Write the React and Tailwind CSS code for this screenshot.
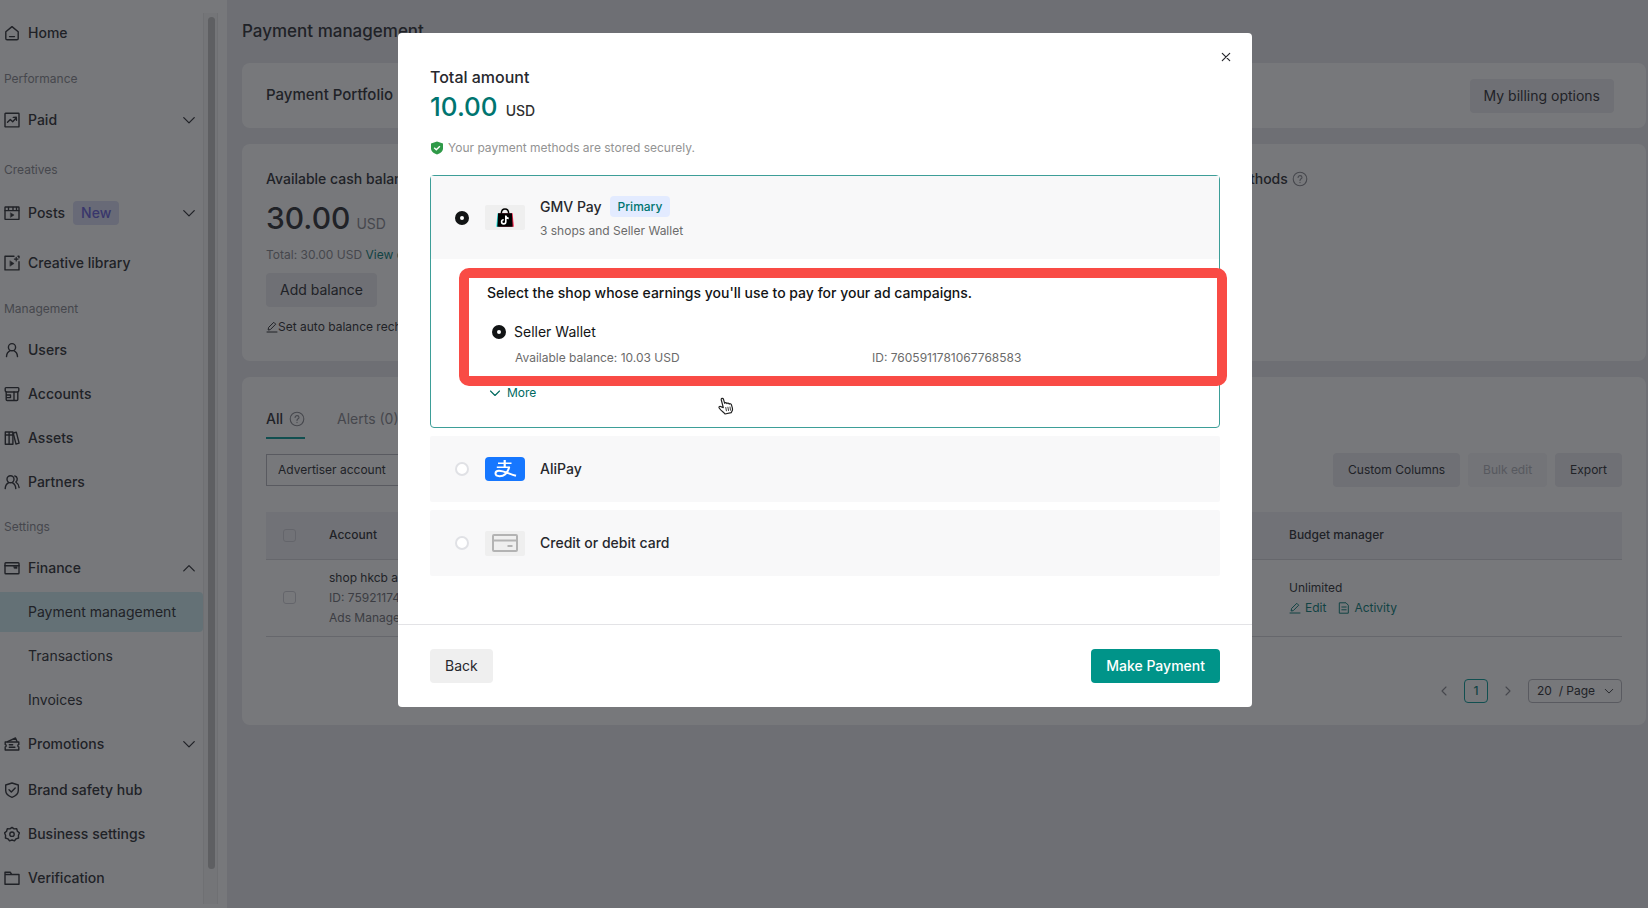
import React, { useState } from "react";

function Icon({ children, className = "size-4", box = "0 0 16 16", width = 1.4 }) {
  return (
    <svg
      viewBox={box}
      className={`shrink-0 ${className}`}
      fill="none"
      stroke="currentColor"
      strokeWidth={width}
      strokeLinecap="round"
      strokeLinejoin="round"
      aria-hidden="true"
    >
      {children}
    </svg>
  );
}

const icons = {
  home: (
    <>
      <path d="M1.800 6.800 8 1.600l6.200 5.200v6.600a1.300 1.300 0 0 1-1.300 1.300H3.100a1.300 1.300 0 0 1-1.300-1.300z" />
      <path d="M5.500 11.600h5" />
    </>
  ),
  paid: (
    <>
      <rect x="1" y="1.300" width="14" height="13.600" rx="0.500" />
      <path d="m3.500 10.300 2.800-2.800 2.400 2.200 3.600-4M9.300 5.400l3-.1.200 3" />
    </>
  ),
  posts: (
    <>
      <rect x="1" y="2" width="14" height="12.400" rx="0.500" />
      <path d="M1 5.600h14M4.500 2.400v3M9 2.400v3M12.500 2.400v3" />
      <path d="m6.700 7.900 3.400 2.100-3.400 2.200z" fill="currentColor" strokeWidth="0.500" />
    </>
  ),
  library: (
    <>
      <path d="M10 1.300H1v13.600h14V6.800M14 1.300h1v1.500" />
      <path d="m6.200 5.900 3.900 2.600-3.900 2.600z" fill="currentColor" strokeWidth="0.500" />
      <path d="M12.200 2.300v3.600M10.400 4.100H14" strokeWidth="1.200" />
    </>
  ),
  user: (
    <>
      <circle cx="8" cy="5.200" r="3.600" />
      <path d="M2.500 14.600c.2-3 1.700-4.900 3.600-5.900M13.500 14.600c-.2-3-1.700-4.900-3.600-5.900" />
    </>
  ),
  accounts: (
    <>
      <path d="M2 1.600h12a.8.8 0 0 1 .8.800v2.200a1.400 1.400 0 0 1-1.400 1.400H2.600a1.400 1.400 0 0 1-1.400-1.400V2.400A.8.8 0 0 1 2 1.600z" />
      <path d="M2.200 6v7.500a1 1 0 0 0 1 1h9.600a1 1 0 0 0 1-1V6M2.200 9h4.300v2.600H2.400M10 6v8.300" />
    </>
  ),
  assets: (
    <>
      <path d="M1.300 2h3.800v12.300H1.300zM5.100 2h3.800v12.300H5.100z" />
      <path d="m9.200 3 3.100-.8 2.800 11-3.100.900zM1.500 5h3.300M5.500 5H9" />
    </>
  ),
  partners: (
    <>
      <circle cx="6.500" cy="5.200" r="3.500" />
      <path d="M1.200 14.600c.2-3 1.600-4.900 3.500-5.900M11.800 14.600c-.2-3-1.600-4.900-3.500-5.900" />
      <path d="M10.800 2c2.900.6 3.200 4.600 1 6 1.800 1.200 3 3.200 3.300 5.600" />
    </>
  ),
  finance: (
    <>
      <rect x="1" y="2.800" width="14" height="11" rx="0.800" />
      <path d="M1 5.700h14" strokeWidth="1.600" />
      <path d="M9.500 6.600h3.600v2h-2.600z" fill="currentColor" strokeWidth="0.400" />
    </>
  ),
  promotions: (
    <>
      <path d="M1.200 6h13.600v2.400c-1.300.2-1.300 2.400 0 2.600V14H1.200v-3c1.300-.2 1.300-2.400 0-2.600z" />
      <path d="M3.500 5.600 11.500 2l1.500 3.500M5.300 8.700h3.400M5.300 11.200h5.600" />
    </>
  ),
  shield: (
    <>
      <path d="M8 1 14.300 3v5.600c0 3.300-3 5.600-6.300 6.700-3.300-1.100-6.300-3.400-6.300-6.700V3z" />
      <path d="m5 7.800 2.300 2.300L11.200 6" />
    </>
  ),
  gear: (
    <>
      <path d="m8 1 2.100 1.500 2.600-.2.700 2.500 2 1.700L14.400 9l.2 2.600-2.500.8-1.600 2L8 13.600l-2.500.8-1.600-2-2.500-.8L1.600 9 .6 6.500l2-1.700.7-2.500 2.600.2z" transform="translate(0 .4)" />
      <circle cx="8" cy="8.200" r="2.200" />
    </>
  ),
  folder: <path d="M1 14.300V2.200h5.200l1.500 2.300H15v9.800zM1 4.500h6.500" />,
};

function Chevron({ dir = "down", className = "size-3" }) {
  const paths = {
    down: "M1.500 4 6 8.500 10.500 4",
    up: "M1.500 8.500 6 4l4.500 4.500",
    left: "M8 2 4 6l4 4",
    right: "M4 2l4 4-4 4",
  };
  return (
    <Icon box="0 0 12 12" className={className} width={1.1}>
      <path d={paths[dir]} />
    </Icon>
  );
}

function NavItem({ icon, label, badge, expand }) {
  const inner = (
    <>
      <Icon className="size-4">{icons[icon]}</Icon>
      <span>{label}</span>
      {badge && <span className="rounded-sm bg-[#d9dcf4] px-2 py-0.5 text-[#645bd8]">{badge}</span>}
      {expand && (
        <span className="ml-auto">
          <Chevron dir={expand} className="size-3.5" />
        </span>
      )}
    </>
  );
  const cls = "flex h-10 w-full items-center gap-2 pr-[7px] pl-1 text-left text-sm font-medium";
  return expand ? (
    <button type="button" className={cls}>{inner}</button>
  ) : (
    <a href="#" className={cls}>{inner}</a>
  );
}

function SubItem({ label, active }) {
  return (
    <a
      href="#"
      aria-current={active ? "page" : undefined}
      className={`flex h-10 items-center rounded-r-sm pl-7 text-sm ${active ? "bg-[#d0eef2]" : ""}`}
    >
      {label}
    </a>
  );
}

function NavLabel({ children }) {
  return <h2 className="mt-4 mb-[11px] pl-1 text-xs leading-5 text-[#85868c]">{children}</h2>;
}

function Sidebar() {
  return (
    <aside className="flex w-[227px] shrink-0 bg-white">
      <nav className="w-[203px] pt-[13px]">
        <NavItem icon="home" label="Home" />
        <NavLabel>Performance</NavLabel>
        <NavItem icon="paid" label="Paid" expand="down" />
        <div className="pt-1">
          <NavLabel>Creatives</NavLabel>
        </div>
        <div className="flex flex-col gap-[10px] pt-0.5">
          <NavItem icon="posts" label="Posts" badge="New" expand="down" />
          <NavItem icon="library" label="Creative library" />
        </div>
        <NavLabel>Management</NavLabel>
        <div className="flex flex-col gap-1">
          <NavItem icon="user" label="Users" />
          <NavItem icon="accounts" label="Accounts" />
          <NavItem icon="assets" label="Assets" />
          <NavItem icon="partners" label="Partners" />
        </div>
        <div className="-mt-px">
          <NavLabel>Settings</NavLabel>
        </div>
        <div className="flex flex-col gap-1">
          <NavItem icon="finance" label="Finance" expand="up" />
          <SubItem label="Payment management" active />
          <SubItem label="Transactions" />
          <SubItem label="Invoices" />
          <NavItem icon="promotions" label="Promotions" expand="down" />
        </div>
        <div className="flex flex-col gap-1 pt-1.5">
          <NavItem icon="shield" label="Brand safety hub" />
          <NavItem icon="gear" label="Business settings" />
          <NavItem icon="folder" label="Verification" />
        </div>
      </nav>
      <div className="mt-[13px] mb-1 w-[15px] border-x border-[#ececec] bg-[#f7f7f7] pt-1 pl-1">
        <div className="h-[96%] w-[7px] rounded-full bg-[#c0c0c0]" />
      </div>
    </aside>
  );
}

function Help({ className = "text-[#85868c]" }) {
  return (
    <Icon className={`size-4 ${className}`} width={1.100}>
      <circle cx="8" cy="8" r="6.800" />
      <path d="M6.100 6.500c0-2.600 3.900-2.400 3.900-.1C10 7.800 8 7.700 8 9.400M8 11.400v.2" />
    </Icon>
  );
}

function Pencil({ className = "size-3" }) {
  return (
    <Icon box="0 0 12 12" className={className} width={1}>
      <path d="M1 11h10M2.200 8.600 2.600 6.400 7.800 1.300l1.900 1.900L4.500 8.400z" />
    </Icon>
  );
}

function GreyButton({ children, className = "px-[15px]", ...rest }) {
  return (
    <button type="button" className={`h-[34px] rounded-sm bg-[#eaeaef] ${className}`} {...rest}>
      {children}
    </button>
  );
}

const boxCls = "block size-[13px] appearance-none rounded-[3px] border border-[#cfd0d6]";

function Page() {
  return (
    <main className="min-w-0 flex-1 bg-[#e8e8ee] pr-0.5 pl-[15px]">
      <h1 className="flex h-[63px] items-center text-[17px] font-medium">Payment management</h1>
      <div className="flex flex-col gap-4">
        <section className="flex h-[65px] items-center justify-between rounded-lg bg-white pr-8 pl-6">
          <h2 className="text-[15px] font-medium">Payment Portfolio</h2>
          <GreyButton className="px-3.5 text-sm">My billing options</GreyButton>
        </section>

        <section className="grid grid-cols-[1fr_455px] rounded-lg bg-white px-6 pt-[25px] pb-6">
          <div>
            <h3 className="text-sm leading-5 font-medium">Available cash balance</h3>
            <p className="mt-[9px] flex items-baseline gap-1.5 text-3xl leading-10 font-medium">
              30.00 <span className="text-sm font-normal text-[#85868c]">USD</span>
            </p>
            <p className="mt-[9px] text-xs leading-4 text-[#85868c]">
              Total: 30.00 USD <a href="#" className="text-[#007a75]">View details</a>
            </p>
            <GreyButton className="mt-2.5 px-3.5 text-sm">Add balance</GreyButton>
            <a href="#" className="mt-2.5 flex items-center text-xs leading-5">
              <Pencil />
              Set auto balance recharge
            </a>
          </div>
          <h3 className="flex h-5 items-center gap-1 text-sm font-medium">
            Payment methods <Help />
          </h3>
        </section>

        <section className="rounded-lg bg-white px-6 pt-7 pb-[22px]">
          <div role="tablist" className="flex gap-8 text-sm">
            <button type="button" role="tab" aria-selected="true" className="flex items-center gap-1.5 border-b-2 border-[#009995] pt-1 pb-2 font-medium">
              All <Help />
            </button>
            <button type="button" role="tab" aria-selected="false" className="border-b-2 border-transparent pt-1 pb-2 text-[#85868c]">
              Alerts (0)
            </button>
          </div>

          <div className="mt-3.5 flex items-center justify-between">
            <select aria-label="Filter by" className="h-8 w-[200px] appearance-none border border-[#b4b5bb] px-[11px] text-xs">
              <option>Advertiser account</option>
            </select>
            <div className="flex gap-2 text-xs">
              <GreyButton>Custom Columns</GreyButton>
              <GreyButton disabled className="bg-[#f4f4f7] px-[15px] text-[#b0b1b8]">Bulk edit</GreyButton>
              <GreyButton>Export</GreyButton>
            </div>
          </div>

          <table className="mt-[25px] w-full table-fixed border-collapse text-left text-xs">
            <colgroup>
              <col className="w-[63px]" />
              <col />
              <col className="w-[333px]" />
            </colgroup>
            <thead>
              <tr className="h-[47px] border-b border-[#d4d5da] bg-[#f1f1f5]">
                <th className="pl-[17px]">
                  <input type="checkbox" aria-label="Select all accounts" className={boxCls} />
                </th>
                <th className="font-medium">Account</th>
                <th className="font-medium">Budget manager</th>
              </tr>
            </thead>
            <tbody>
              <tr className="h-[77px] border-b border-[#d4d5da]">
                <td className="pl-[17px]">
                  <input type="checkbox" aria-label="Select shop hkcb ads" className={boxCls} />
                </td>
                <td className="leading-5">
                  <p>shop hkcb ads</p>
                  <p className="text-[#6c6d73]">ID: 75921174</p>
                  <p className="text-[#6c6d73]">Ads Manager</p>
                </td>
                <td className="leading-5">
                  <p>Unlimited</p>
                  <p className="flex gap-3 text-[#007a75]">
                    <a href="#" className="flex items-center gap-1"><Pencil />Edit</a>
                    <a href="#" className="flex items-center gap-1">
                      <Icon box="0 0 12 12" className="size-3" width={1}>
                        <path d="M1.700.800H8l2.300 2.400v8H1.700zM3.800 5h4.400M3.800 7.800h4.400" />
                      </Icon>
                      Activity
                    </a>
                  </p>
                </td>
              </tr>
            </tbody>
          </table>

          <div className="mt-[42px] flex items-center justify-end text-xs">
            <button type="button" aria-label="Previous page" className="px-3.5 text-[#85868c]"><Chevron dir="left" /></button>
            <button type="button" aria-current="page" className="size-6 rounded-sm border border-[#009995] font-medium text-[#007a75]">1</button>
            <button type="button" aria-label="Next page" className="px-3.5 text-[#85868c]"><Chevron dir="right" /></button>
            <div className="grid items-center">
              <select aria-label="Rows per page" className="col-start-1 row-start-1 h-6 w-[94px] appearance-none rounded-sm border border-[#b4b5bb] pl-2">
                <option>20 &nbsp;/ Page</option>
              </select>
              <span className="pointer-events-none col-start-1 row-start-1 mr-2 justify-self-end"><Chevron className="size-2.5" /></span>
            </div>
          </div>
        </section>
      </div>
    </main>
  );
}

const radioCls =
  "size-3.5 shrink-0 appearance-none rounded-full border-2 border-[#e0e1e5] bg-white checked:border-[5px] checked:border-[#121415]";

function TikTokBag() {
  return (
    <span className="flex h-[25px] w-10 shrink-0 items-center justify-center rounded-xs bg-[#efefef]">
      <svg viewBox="0 0 18 20" className="h-5 w-[18px]" aria-hidden="true">
        <path d="M1.600 5.300h13.800l.3 13.400H.2z" fill="#25f4ee" />
        <path d="M2.600 5.300h14l1.300 13.400H3z" fill="#fe2c55" />
        <path d="M2 5.300h14l.700 13.400H1.300z" fill="#000" />
        <path d="M5.300 5.500C5.500-.5 12.500-.5 12.700 5.500" fill="none" stroke="#000" strokeWidth="1.500" />
        <path d="M9.800 7.500v6.300a2.100 2.100 0 1 1-2.100-2.100M9.800 8c.3 1.500 1.400 2.300 2.900 2.400" fill="none" stroke="#fff" strokeWidth="1.600" />
      </svg>
    </span>
  );
}

function AliPayLogo() {
  return (
    <span className="flex h-6 w-10 shrink-0 items-center justify-center rounded-sm bg-[#1677ff]">
      <svg viewBox="0 0 24 20" className="h-5 w-6" fill="none" stroke="#fff" aria-hidden="true">
        <path d="M5 4.300h13.500M3.800 8.200H17" strokeWidth="1.500" />
        <path d="M11.700 1v7" strokeWidth="2.200" />
        <path d="M16.300 8c-1.500 5.200-5 9.200-9.700 9.200-5.500 0-5.200-5.200-.7-5.400 4.100-.1 8.600 2.300 17.100 5" strokeWidth="2" />
      </svg>
    </span>
  );
}

function CardLogo() {
  return (
    <span className="flex h-[25px] w-10 shrink-0 items-center justify-center rounded-xs bg-[#efefef]">
      <svg viewBox="0 0 26 18" className="h-[18px] w-[26px]" fill="none" stroke="#b3b3b3" strokeWidth="2" aria-hidden="true">
        <rect x="1" y="1" width="24" height="16" rx="1" />
        <path d="M1 6.500h24M15.500 12h5" />
      </svg>
    </span>
  );
}

function PayDialog() {
  const [method, setMethod] = useState("gmv");
  const pick = (id) => ({ id, name: "method", type: "radio", checked: method === id, onChange: () => setMethod(id) });

  return (
    <div className="fixed inset-0 flex items-start justify-center bg-[#1c1e23]/60 pt-[33px] pl-0.5">
      <div role="dialog" aria-modal="true" aria-labelledby="pay-title" className="relative w-[854px] rounded-sm bg-white">
        <button type="button" aria-label="Close" className="absolute top-4 right-[18px] flex size-4 items-center justify-center">
          <Icon box="0 0 10 10" className="size-2.5" width={1.200}>
            <path d="m1.300 1.300 7.400 7.400M8.700 1.300 1.300 8.700" />
          </Icon>
        </button>

        <div className="px-8 pt-8 pb-12">
          <h2 id="pay-title" className="text-base leading-6 font-medium">Total amount</h2>
          <p className="flex items-baseline gap-2 text-[26px] leading-9 font-medium text-[#007570]">
            10.00 <span className="text-sm text-[#303030]">USD</span>
          </p>
          <p className="mt-[13px] flex items-center gap-1 text-xs leading-5 text-[#939393]">
            <svg viewBox="0 0 14 14" className="size-3.5" aria-hidden="true">
              <path d="M7 .500 13 2.500v5c0 3-3 5-6 6-3-1-6-3-6-6v-5z" fill="#2f9a48" />
              <path d="m4.200 6.700 2.100 2.100 3.600-3.600" fill="none" stroke="#fff" strokeWidth="1.400" />
            </svg>
            Your payment methods are stored securely.
          </p>

          <div className="mt-[17px] flex flex-col gap-2">
            <div className="rounded-sm border border-[#3d9e98]">
              <div className="flex h-[83px] items-center bg-[#f8f8f9] pl-6">
                <input {...pick("gmv")} className={radioCls} />
                <label htmlFor="gmv" className="flex items-center gap-[15px] pl-4">
                  <TikTokBag />
                  <span className="pt-0.5">
                    <span className="flex items-center gap-2 text-sm font-medium">
                      GMV Pay
                      <span className="rounded-sm bg-[#e3ebff] px-2 text-xs leading-[21px] text-[#007570]">Primary</span>
                    </span>
                    <span className="mt-1 block text-xs leading-5 text-[#6b6b6b]">3 shops and Seller Wallet</span>
                  </span>
                </label>
              </div>

              <div className="relative pt-6 pb-6 pl-14">
                <h3 className="text-sm leading-5 font-medium text-[#121415]">
                  Select the shop whose earnings you'll use to pay for your ad campaigns.
                </h3>
                <div className="mt-[19px] flex items-center gap-2 pl-[5px]">
                  <input type="radio" id="wallet" name="shop" defaultChecked className={radioCls} />
                  <label htmlFor="wallet" className="text-sm leading-5 text-[#121415]">Seller Wallet</label>
                </div>
                <div className="mt-1.5 grid grid-cols-[357px_1fr] pl-7 text-xs leading-5 text-[#6b6b6b]">
                  <p>Available balance: 10.03 USD</p>
                  <p>ID: 7605911781067768583</p>
                </div>
                <button type="button" className="mt-[15px] flex items-center gap-1.5 pl-0.5 text-xs leading-5 text-[#00695f]">
                  <Chevron />
                  More
                </button>

                <div className="pointer-events-none absolute top-[9px] -right-2 left-7 h-[118px] rounded-[10px] border-10 border-[#f94b45]" />
                <svg viewBox="0 0 16 18" className="absolute bottom-3 left-[287px] h-[18px] w-4" fill="#fff" stroke="#222" strokeWidth="1.200" strokeLinejoin="round" strokeLinecap="round" aria-hidden="true">
                  <path d="M5.300 10.600 3.300 3c-.4-1.700 1.600-2.300 2.200-.7l1.200 4c.3-1 1.900-.9 2.200.3.400-.9 2-.7 2.300.5.500-.7 1.900-.4 2.200.7.700 2 1.400 3.800 1 5.500l-1.200 2.400-6.200 1.300C6 15.400 3.300 14.300 1.200 11c-.7-1.500.9-2.200 2.200-1.100z" />
                  <path d="m7.800 10.500.600 3.300M9.900 10.200l.6 3.300M12 10l.5 3.200" strokeWidth="0.900" />
                </svg>
              </div>
            </div>

            <div className="flex h-[66px] items-center rounded-xs bg-[#f8f8f9] pl-[25px]">
              <input {...pick("alipay")} className={radioCls} />
              <label htmlFor="alipay" className="flex items-center gap-[15px] pl-4 text-sm font-medium"><AliPayLogo />AliPay</label>
            </div>
            <div className="flex h-[66px] items-center rounded-xs bg-[#f8f8f9] pl-[25px]">
              <input {...pick("card")} className={radioCls} />
              <label htmlFor="card" className="flex items-center gap-[15px] pl-4 text-sm font-medium"><CardLogo />Credit or debit card</label>
            </div>
          </div>
        </div>

        <footer className="flex items-center justify-between border-t border-[#e3e3e6] px-8 py-6 text-sm">
          <button type="button" className="h-[34px] rounded-sm bg-[#efefef] px-[15px]">Back</button>
          <button type="button" className="h-[34px] rounded-sm bg-[#009489] px-[15px] font-medium text-white">Make Payment</button>
        </footer>
      </div>
    </div>
  );
}

export default function App() {
  return (
    <div className="flex min-h-screen font-['Inter','Liberation_Sans',sans-serif] text-[#27282d]">
      <Sidebar />
      <Page />
      <PayDialog />
    </div>
  );
}
